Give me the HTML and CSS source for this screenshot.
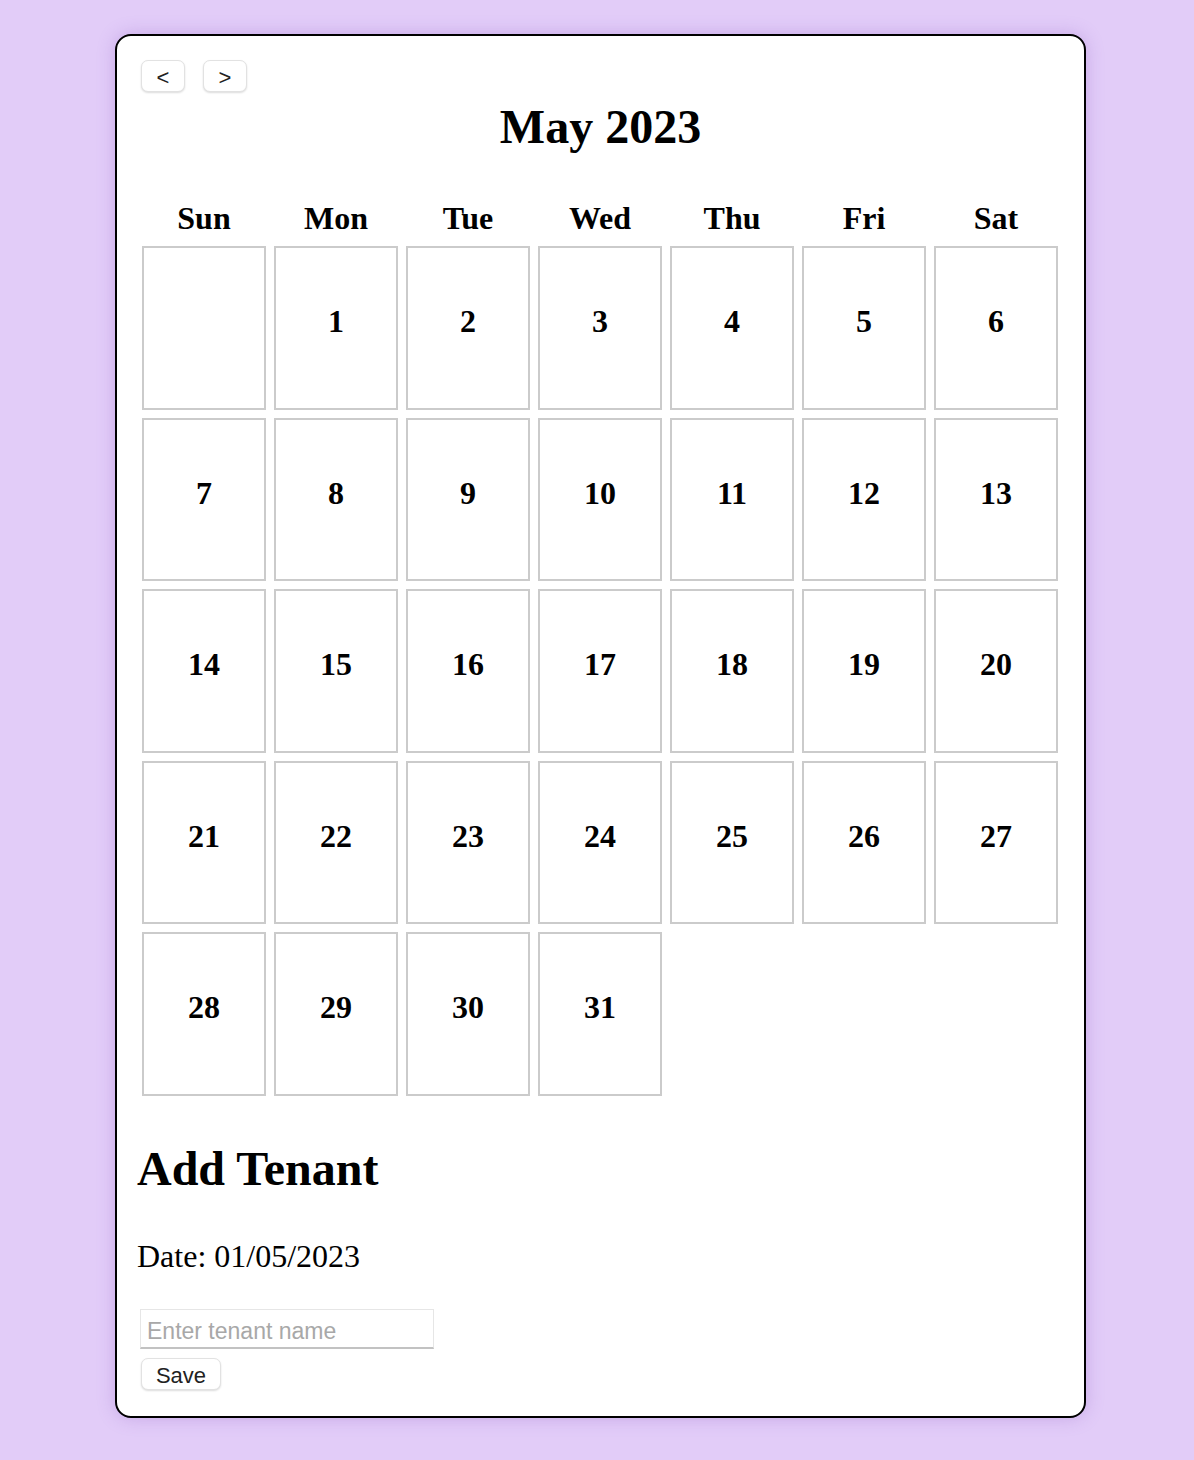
FILE: index.html
```html
<!DOCTYPE html>
<html lang="en">
<head>
<meta charset="utf-8">
<title>Calendar</title>
<link rel="stylesheet" href="styles.css">
</head>
<body>
<div class="card">
  <div class="nav">
    <button class="nav-btn">&lt;</button>
    <button class="nav-btn">&gt;</button>
  </div>
  <h2 class="title">May 2023</h2>
  <div class="week">
    <div>Sun</div><div>Mon</div><div>Tue</div><div>Wed</div><div>Thu</div><div>Fri</div><div>Sat</div>
  </div>
  <div class="grid">
    <div class="cell"></div>
    <div class="cell"><span>1</span></div>
    <div class="cell"><span>2</span></div>
    <div class="cell"><span>3</span></div>
    <div class="cell"><span>4</span></div>
    <div class="cell"><span>5</span></div>
    <div class="cell"><span>6</span></div>
    <div class="cell"><span>7</span></div>
    <div class="cell"><span>8</span></div>
    <div class="cell"><span>9</span></div>
    <div class="cell"><span>10</span></div>
    <div class="cell"><span>11</span></div>
    <div class="cell"><span>12</span></div>
    <div class="cell"><span>13</span></div>
    <div class="cell"><span>14</span></div>
    <div class="cell"><span>15</span></div>
    <div class="cell"><span>16</span></div>
    <div class="cell"><span>17</span></div>
    <div class="cell"><span>18</span></div>
    <div class="cell"><span>19</span></div>
    <div class="cell"><span>20</span></div>
    <div class="cell"><span>21</span></div>
    <div class="cell"><span>22</span></div>
    <div class="cell"><span>23</span></div>
    <div class="cell"><span>24</span></div>
    <div class="cell"><span>25</span></div>
    <div class="cell"><span>26</span></div>
    <div class="cell"><span>27</span></div>
    <div class="cell"><span>28</span></div>
    <div class="cell"><span>29</span></div>
    <div class="cell"><span>30</span></div>
    <div class="cell"><span>31</span></div>
  </div>
  <h2 class="section-title">Add Tenant</h2>
  <p class="date">Date: 01/05/2023</p>
  <input class="tenant-input" type="text" placeholder="Enter tenant name">
  <button class="save-btn">Save</button>
</div>
</body>
</html>
```

FILE: styles.css
```css
html {
  background: #e2ccf8;
}
body {
  margin: 0;
  padding: 34px 0 42px 115px;
  font-family: "Liberation Serif", "Times New Roman", serif;
  color: #000;
}
.card {
  box-sizing: border-box;
  width: 971px;
  background: #fff;
  border: 2px solid #000;
  border-radius: 16px;
  padding: 24px 20px 26px 20px;
  box-shadow: 0 0 18px rgba(130, 80, 190, 0.28);
  display: flex;
  flex-direction: column;
  align-items: stretch;
}
.nav {
  display: flex;
  gap: 18px;
  padding-left: 4px;
}
button {
  font-family: "Liberation Sans", Arial, sans-serif;
  color: #222;
  background: #fff;
  border: 1px solid #e2e2e2;
  border-radius: 7px;
  box-shadow: 0 1px 2px rgba(0, 0, 0, 0.14);
  padding: 0;
  cursor: pointer;
}
.nav-btn {
  width: 44px;
  height: 32px;
  font-size: 22px;
  line-height: 33px;
}
.title {
  margin: 7px 0 0 0;
  font-size: 48px;
  line-height: 56px;
  font-weight: bold;
  text-align: center;
}
.week {
  margin-top: 45px;
  display: grid;
  grid-template-columns: repeat(7, 1fr);
  column-gap: 8px;
  padding: 0 6px 0 5px;
  font-size: 32px;
  line-height: 36px;
  font-weight: bold;
  text-align: center;
}
.grid {
  margin-top: 10px;
  display: grid;
  grid-template-columns: repeat(7, 1fr);
  grid-auto-rows: 163.5px;
  gap: 8px;
  padding: 0 6px 0 5px;
}
.cell {
  box-sizing: border-box;
  border: 2px solid #cbcbcb;
  display: flex;
  align-items: center;
  justify-content: center;
  padding-bottom: 12px;
  font-size: 32px;
  font-weight: bold;
}
.section-title {
  margin: 45px 0 0 0;
  font-size: 48px;
  line-height: 56px;
  font-weight: bold;
}
.date {
  margin: 41px 0 0 0;
  font-size: 32px;
  line-height: 36px;
}
.tenant-input {
  box-sizing: border-box;
  align-self: flex-start;
  margin: 35px 0 0 3px;
  width: 294px;
  height: 40px;
  border: 1px solid #e6e6e6;
  border-bottom: 2px solid #c2c2c2;
  padding: 6px 6px 0 6px;
  font-family: "Liberation Sans", Arial, sans-serif;
  font-size: 23px;
  color: #222;
  background: #fff;
  outline: none;
}
.tenant-input::placeholder {
  color: #a8a8a8;
}
.save-btn {
  align-self: flex-start;
  margin: 9px 0 0 4px;
  width: 80px;
  height: 32px;
  font-size: 22px;
  line-height: 34px;
}
```
